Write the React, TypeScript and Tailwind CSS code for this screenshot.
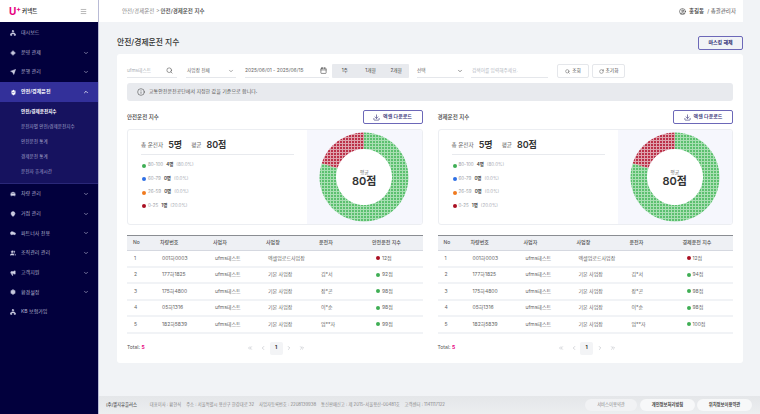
import { CarFront, Car, ChevronDown, ChevronUp, ChevronLeft, ChevronRight, ChevronsLeft, ChevronsRight, Calendar, Download, Info, LocateFixed, MapPin, Megaphone, Menu, Network, RotateCw, Search, Send, Settings, ShieldCheck, UserCircle, Users } from "lucide-react"

const menuTop = [
    { label: "대시보드", icon: Network, arrow: false },
    { label: "운영 관제", icon: LocateFixed, arrow: true },
    { label: "운행 관리", icon: Send, arrow: true },
]

const menuBottom = [
    { label: "차량 관리", icon: CarFront, arrow: true },
    { label: "거점 관리", icon: MapPin, arrow: true },
    { label: "파트너사 전용", icon: Car, arrow: true },
    { label: "조직관리 관리", icon: Users, arrow: true },
    { label: "고객지원", icon: Megaphone, arrow: true },
    { label: "환경설정", icon: Settings, arrow: true },
    { label: "KB 보험가입", icon: Network, arrow: false },
]

const subMenu = ["안전/경제운전지수", "운전자별 안전/경제운전지수", "안전운전 통계", "경제운전 통계", "운전자 휴게시간"]

const legend = [
    { range: "80-100", count: "4명", rate: "(80.0%)", color: "bg-[#3fae54]" },
    { range: "60-79", count: "0명", rate: "(0.0%)", color: "bg-[#2f6fe4]" },
    { range: "26-59", count: "0명", rate: "(0.0%)", color: "bg-[#f07a1f]" },
    { range: "0-25", count: "1명", rate: "(20.0%)", color: "bg-[#a90f22]" },
]

const rows = [
    { no: 1, car: "001하0003", site: "엑셀업로드사업장", driver: "" },
    { no: 2, car: "177하1825", site: "기본 사업장", driver: "김*서" },
    { no: 3, car: "175하4800", site: "기본 사업장", driver: "장*곤" },
    { no: 4, car: "05하1316", site: "기본 사업장", driver: "이*순" },
    { no: 5, car: "182하5839", site: "기본 사업장", driver: "엄**자" },
]

const MenuItem = ({ label, icon: Icon, arrow }: { label: string; icon: typeof Network; arrow: boolean }) => (
    <div className="flex h-[19.7px] items-center pl-[10px] pr-[9px] text-[#b4b5d0]">
        <Icon className="w-[6px] h-[6px] shrink-0 fill-[#d8d9ea]" strokeWidth={2} />
        <span className="ml-[5px] text-[5px]">{label}</span>
        {arrow && <ChevronDown className="ml-auto w-[6px] h-[6px]" strokeWidth={2.5} />}
    </div>
)

const Sidebar = () => (
    <aside className="w-[99px] shrink-0 flex flex-col bg-[#02003d] border-r border-r-[#b9bbd6]">
        <div className="h-[22px] shrink-0 bg-white flex items-center pl-[9px] pr-[11px]">
            <span className="text-[10px] leading-none font-bold text-[#e6007e]">U<sup className="text-[7px]">+</sup></span>
            <span className="ml-[1px] text-[5.5px] font-bold text-[#444]">커넥트</span>
            <Menu className="ml-auto w-[7px] h-[7px] text-[#888]" strokeWidth={2} />
        </div>
        <div className="pt-[1px]">
            {menuTop.map((m) => <MenuItem key={m.label} {...m} />)}
        </div>
        <div className="flex h-[20px] items-center pl-[10px] pr-[9px] bg-[#33309a] text-white">
            <ShieldCheck className="w-[7px] h-[7px] shrink-0 fill-white stroke-[#33309a]" strokeWidth={2} />
            <span className="ml-[4px] text-[5px] font-semibold">안전/경제운전</span>
            <ChevronUp className="ml-auto w-[6px] h-[6px]" strokeWidth={3} />
        </div>
        <div className="bg-[#16125f] pt-[3px] pb-[3px] border-b border-b-[#2a2779]">
            {subMenu.map((s, i) => (
                <div key={s} className={`h-[15px] flex items-center pl-[21px] text-[4.6px] ${i === 0 ? "font-bold text-white" : "text-[#a3a4cb]"}`}>{s}</div>
            ))}
        </div>
        <div>
            {menuBottom.map((m) => <MenuItem key={m.label} {...m} />)}
        </div>
    </aside>
)

const FilterBar = () => (
    <div className="flex items-center h-[14px] text-[4.7px] text-[#666]">
        <div className="w-[50px] h-full flex items-center justify-between border-b border-b-[#e5e7eb] pr-[4px]">
            <span className="text-[#a8acb4]">ufms테스트</span>
            <Search className="w-[7px] h-[7px] text-[#555]" strokeWidth={2} />
        </div>
        <div className="ml-[9px] w-[50px] h-full flex items-center justify-between border-b border-b-[#e5e7eb] px-[1px] pr-[2px]">
            <span>사업장 전체</span>
            <ChevronDown className="w-[6px] h-[6px] text-[#555]" strokeWidth={2} />
        </div>
        <div className="ml-[9px] w-[84px] h-full flex items-center justify-between border-b border-b-[#e5e7eb] pr-[2px]">
            <span className="text-[4.9px]">2025/06/01 - 2025/06/15</span>
            <Calendar className="w-[7px] h-[7px] text-[#444]" strokeWidth={2} />
        </div>
        <div className="ml-[3px] w-[77px] h-full grid grid-cols-3 items-center text-center bg-[#e8eaee] rounded-[1px] text-[#444]">
            <span>1주</span>
            <span>1개월</span>
            <span>2개월</span>
        </div>
        <div className="ml-[8px] w-[47px] h-full flex items-center justify-between border-b border-b-[#e5e7eb] pr-[1px]">
            <span>선택</span>
            <ChevronDown className="w-[6px] h-[6px] text-[#555]" strokeWidth={2.5} />
        </div>
        <div className="ml-[7px] w-[77px] h-full flex items-center border-b border-b-[#e5e7eb] text-[#b4b8bf] pl-[1px]">검색어를 입력해주세요.</div>
        <button className="ml-[9px] w-[32px] h-full flex items-center justify-center gap-[2px] border border-[#e5e7eb] rounded-[2px] text-[#444]">
            <Search className="w-[5px] h-[5px]" strokeWidth={2} />조회
        </button>
        <button className="ml-[3px] w-[33px] h-full flex items-center justify-center gap-[2px] border border-[#e5e7eb] rounded-[2px] text-[#444]">
            <RotateCw className="w-[5px] h-[5px]" strokeWidth={2} />초기화
        </button>
    </div>
)

const Donut = ({ id }: { id: string }) => {
    // 80% green, 20% red, starts at 12 o'clock
    const R = 44.5
    const r = 28
    const a = (288 * Math.PI) / 180
    const pt = (rad: number) => `${45 + rad * Math.sin(a)} ${45 - rad * Math.cos(a)}`
    const red = `M45 0.5 A${R} ${R} 0 0 0 ${pt(R)} L${pt(r)} A${r} ${r} 0 0 1 45 ${45 - r} Z`
    const green = `M45 0.5 A${R} ${R} 0 1 1 ${pt(R)} L${pt(r)} A${r} ${r} 0 1 0 45 ${45 - r} Z`
    return (
        <svg width="90" height="90" viewBox="0 0 90 90">
            <defs>
                <pattern id={`${id}-g`} width="3" height="3" patternUnits="userSpaceOnUse">
                    <rect width="3" height="3" fill="#a9dfb3" />
                    <rect width="2" height="2" fill="#5cc06f" />
                </pattern>
                <pattern id={`${id}-r`} width="3" height="3" patternUnits="userSpaceOnUse">
                    <rect width="3" height="3" fill="#dea2ad" />
                    <rect width="2" height="2" fill="#bb3149" />
                </pattern>
            </defs>
            <circle cx="45" cy="45" r={r} fill="white" />
            <path d={green} fill={`url(#${id}-g)`} />
            <path d={red} fill={`url(#${id}-r)`} />
        </svg>
    )
}

const Score = ({ value }: { value: number }) => (
    <span className="flex items-center gap-[2px]">
        <span className={`w-[4px] h-[4px] rounded-full ${value < 26 ? "bg-[#a90f22]" : "bg-[#3fae54]"}`} />
        {value}점
    </span>
)

const Section = ({ id, title, scores }: { id: string; title: string; scores: number[] }) => (
    <section>
        <div className="flex items-center justify-between h-[14px]">
            <h3 className="text-[5.5px] font-medium text-[#444]">{title}</h3>
            <button className="w-[60px] h-full flex items-center justify-center gap-[3px] border border-[#6c68b8] rounded-[2px] text-[5px] font-medium text-[#2a2670]">
                <Download className="w-[7px] h-[7px]" strokeWidth={2} />엑셀 다운로드
            </button>
        </div>
        <div className="mt-[5px] h-[96px] flex border border-[#eceef2] rounded-[3px] overflow-hidden">
            <div className="w-[179px] pl-[13px] pr-[13px] pt-[7px]">
                <div className="flex items-center h-[18px] border-b border-b-[#e8eaee] pb-[1px]">
                    <span className="text-[5.6px] text-[#666]">총 운전자</span>
                    <span className="ml-[5px] text-[9px] font-semibold text-[#333]">5명</span>
                    <span className="ml-[9px] text-[5.6px] text-[#666]">평균</span>
                    <span className="ml-[5px] text-[9px] font-semibold text-[#333]">80점</span>
                </div>
                <div className="mt-[4px]">
                    {legend.map((l) => (
                        <div key={l.range} className="flex items-center h-[13.5px] text-[4.5px]">
                            <span className={`ml-[1px] w-[4px] h-[4px] rounded-full ${l.color}`} />
                            <span className="ml-[2px] text-[#9a9ea6]">{l.range}</span>
                            <span className="ml-[3px] font-semibold text-[#444]">{l.count}</span>
                            <span className="ml-[3px] text-[#a8acb4]">{l.rate}</span>
                        </div>
                    ))}
                </div>
            </div>
            <div className="flex-1 relative flex items-center justify-center bg-[#f6f7fd]">
                <Donut id={id} />
                <div className="absolute inset-0 pt-[2px] flex flex-col items-center justify-center leading-none">
                    <span className="text-[5px] text-[#777]">평균</span>
                    <span className="mt-[1px] text-[11px] font-semibold text-[#333]">80점</span>
                </div>
            </div>
        </div>
        <div className="mt-[10px] text-[5px] text-[#666]">
            <div className="grid grid-cols-[27px_53px_53px_53px_53px_1fr] h-[16px] items-center bg-[#eef0f4] border-t border-t-[#8a8d92] border-b border-b-[#d5d8e0] font-medium text-[#555]">
                <span className="pl-[6px]">No</span>
                <span className="pl-[6px]">차량번호</span>
                <span className="pl-[6px]">사업자</span>
                <span className="pl-[6px]">사업장</span>
                <span className="pl-[6px]">운전자</span>
                <span className="pl-[6px]">{title}</span>
            </div>
            {rows.map((row, i) => (
                <div key={row.no} className="grid grid-cols-[27px_53px_53px_53px_53px_1fr] h-[16.5px] items-center border-b-2 border-b-[#f1f3f6]">
                    <span className="pl-[7px]">{row.no}</span>
                    <span className="pl-[8px]">{row.car}</span>
                    <span className="pl-[8px]">ufms테스트</span>
                    <span className="pl-[8px]">{row.site}</span>
                    <span className="pl-[8px]">{row.driver}</span>
                    <span className="pl-[10px]"><Score value={scores[i]} /></span>
                </div>
            ))}
            <div className="relative flex items-center h-[13px] mt-[8px]">
                <span className="text-[#555]">Total: <b className="text-[#e6007e]">5</b></span>
                <div className="absolute left-[120px] flex items-center text-[#a8acb4]">
                    <ChevronsLeft className="w-[6px] h-[6px]" />
                    <ChevronLeft className="ml-[7px] w-[6px] h-[6px]" />
                    <span className="ml-[3.5px] w-[13px] h-[13px] flex items-center justify-center bg-[#f3f4f6] rounded-[2px] font-bold text-[#333]">1</span>
                    <ChevronRight className="ml-[3.5px] w-[6px] h-[6px]" />
                    <ChevronsRight className="ml-[7px] w-[6px] h-[6px]" />
                </div>
            </div>
        </div>
    </section>
)

const App = () => {
    return (
        <div className="flex w-[760px] h-[414px] overflow-hidden font-['Inter','Noto_Sans_CJK_KR',sans-serif] bg-[#f1f3f6]">
            <Sidebar />
            <div className="flex-1 flex flex-col min-w-0">
                <header className="h-[22px] shrink-0 mr-[17px] bg-white flex items-center pl-[23px] pr-[7px] text-[5.5px]">
                    <span className="text-[#888]">안전/경제운전 &gt;</span>
                    <span className="ml-[1px] font-medium text-[#444]">안전/경제운전 지수</span>
                    <UserCircle className="ml-auto w-[7px] h-[7px] text-[#333]" strokeWidth={2} />
                    <span className="ml-[3px] font-medium text-[#333]">홍길동</span>
                    <span className="ml-[3px] text-[#555]">/ 총괄관리자</span>
                </header>
                <main className="flex-1 min-h-0 pl-[18px] pr-[17px]">
                    <div className="flex items-center justify-between h-[14px] mt-[14px]">
                        <h1 className="text-[7.8px] font-medium text-[#333]">안전/경제운전 지수</h1>
                        <button className="w-[45px] h-full border border-[#6c68b8] rounded-[2px] text-[5px] font-bold text-[#2a2670]">마스킹 해제</button>
                    </div>
                    <div className="mt-[4px] h-[309px] bg-white rounded-[3px] p-[10px]">
                        <FilterBar />
                        <div className="mt-[5px] h-[18px] flex items-center bg-[#e8eaee] rounded-[3px] pl-[10px] text-[5px] text-[#555]">
                            <Info className="w-[8px] h-[8px] text-[#333]" strokeWidth={1.5} />
                            <span className="ml-[4px]">교통안전운전공단에서 지정한 값을 기준으로 합니다.</span>
                        </div>
                        <div className="mt-[9px] grid grid-cols-2 gap-[15px]">
                            <Section id="safe" title="안전운전 지수" scores={[12, 92, 98, 98, 99]} />
                            <Section id="eco" title="경제운전 지수" scores={[12, 94, 98, 98, 100]} />
                        </div>
                    </div>
                </main>
                <footer className="h-[18px] shrink-0 flex items-center bg-gradient-to-b from-[#e4e6e9] to-[#eceef0] pl-[7px] pr-[8px] text-[4.3px] text-[#888]">
                    <span className="font-medium text-[#555]">(주)엘지유플러스</span>
                    <span className="ml-[13px]">대표이사 : 황현식</span>
                    <span className="ml-[5px]">주소 : 서울특별시 용산구 한강대로 32</span>
                    <span className="ml-[5px]">사업자등록번호 : 2208139938</span>
                    <span className="ml-[5px]">통신판매신고 : 제 2015-서울용산-00481호</span>
                    <span className="ml-[5px]">고객센터 : 1141117122</span>
                    <button className="ml-auto w-[52px] h-[12px] bg-[#f1f2f4] rounded-full text-[#888]">서비스이용약관</button>
                    <button className="ml-[3px] w-[55px] h-[12px] bg-[#f7f8f9] rounded-full font-bold text-[#444]">개인정보처리방침</button>
                    <button className="ml-[2px] w-[55px] h-[12px] bg-[#f7f8f9] rounded-full font-bold text-[#444]">위치정보이용약관</button>
                </footer>
            </div>
        </div>
    )
}

export default App
